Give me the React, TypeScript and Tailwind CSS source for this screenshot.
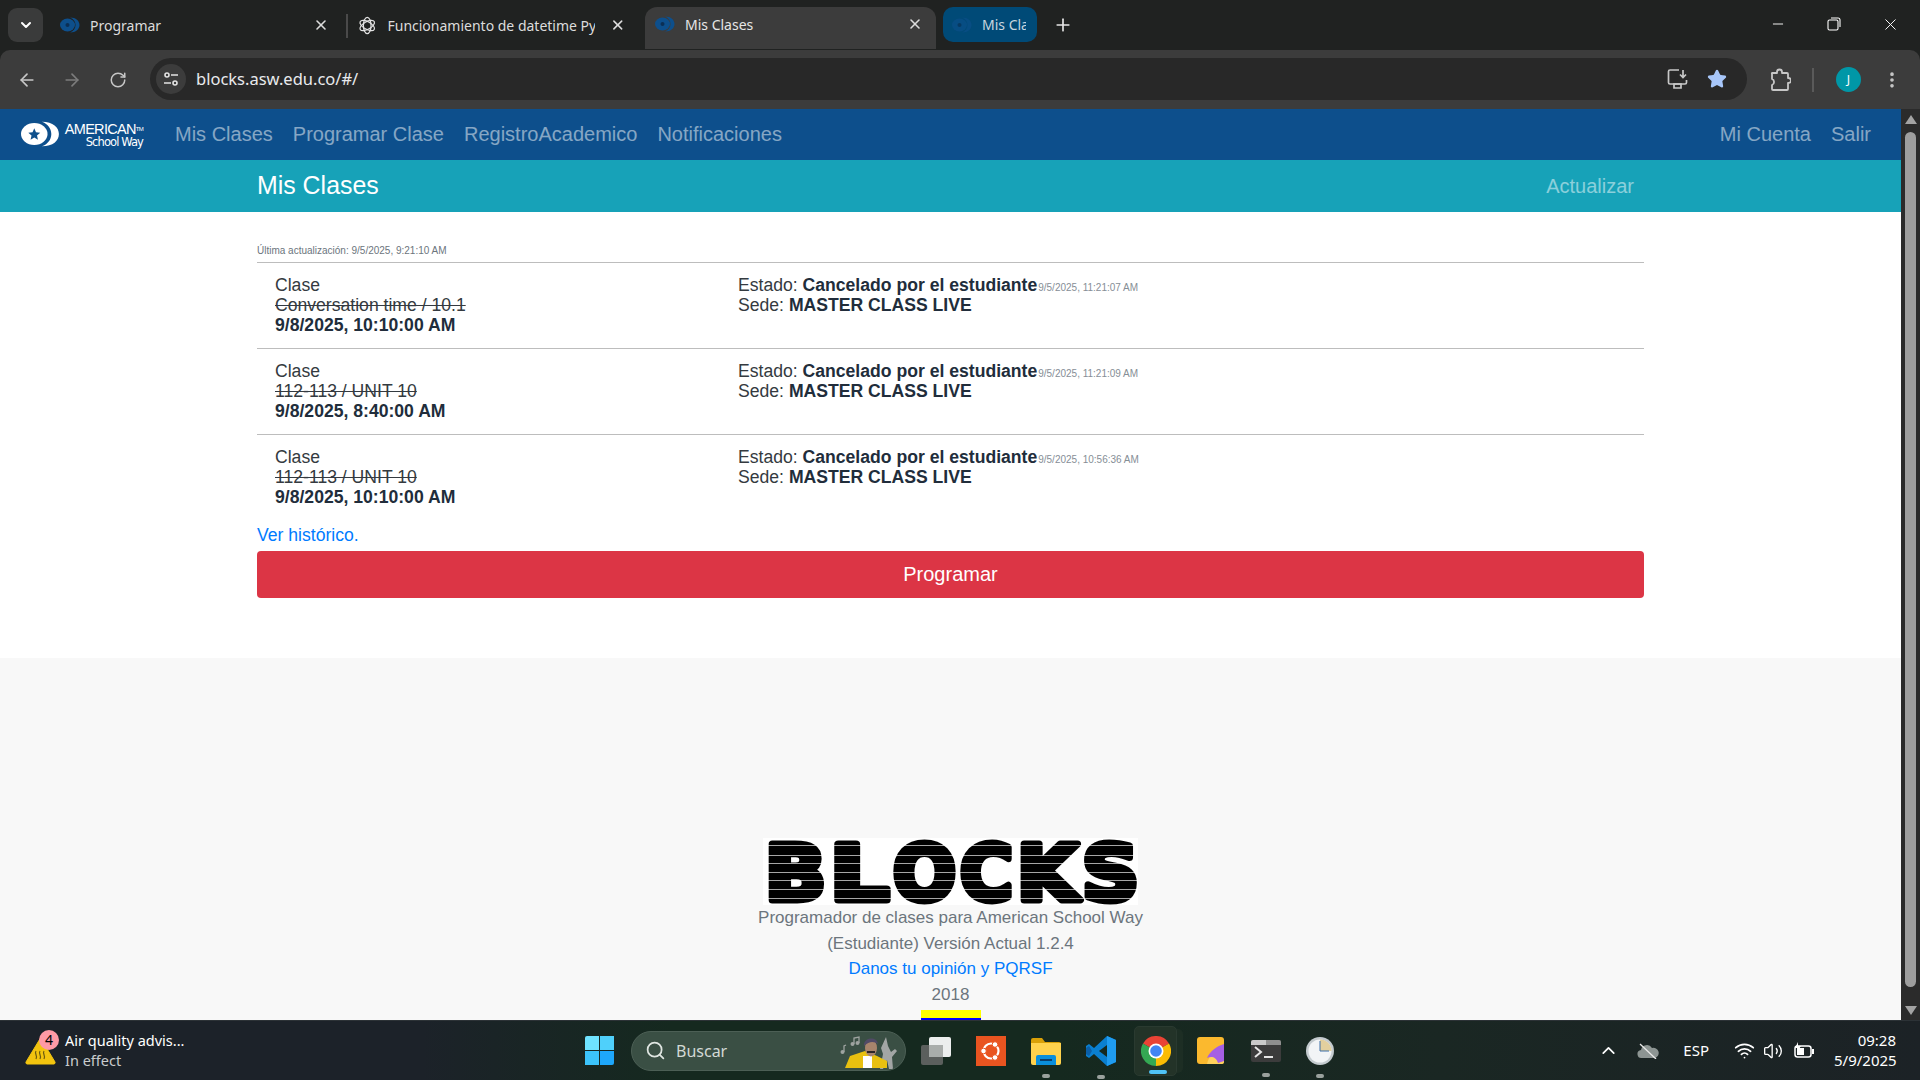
import { ArrowLeft, ArrowRight, RotateCw, X, Plus, ChevronDown, Minus, EllipsisVertical, Star, Search, ChevronUp, Wifi, Volume2 } from 'lucide-react';

const classes = [
  { name: 'Conversation time / 10.1', date: '9/8/2025, 10:10:00 AM', cancelled: '9/5/2025, 11:21:07 AM' },
  { name: '112-113 / UNIT 10', date: '9/8/2025, 8:40:00 AM', cancelled: '9/5/2025, 11:21:09 AM' },
  { name: '112-113 / UNIT 10', date: '9/8/2025, 10:10:00 AM', cancelled: '9/5/2025, 10:56:36 AM' },
];

function AswIcon({ dim = false }: { dim?: boolean }) {
  return (
    <svg width="20" height="16" viewBox="0 0 40 32" className={dim ? 'opacity-60' : ''}>
      <path d="M20 1c12 0 19 7 19 15s-7 15-19 15c7-3 11-8 11-15S27 4 20 1z" fill="#0d4f8c" />
      <ellipse cx="15" cy="16" rx="15" ry="13" fill="#0d4f8c" />
      <circle cx="15" cy="16" r="4" fill="#0b2f55" />
    </svg>
  );
}

function BlocksLogo() {
  const letters: [string, number, number][] = [
    ['B', 4, 55], ['L', 69, 53], ['O', 132, 57], ['C', 199, 47], ['K', 256, 55], ['S', 321, 51],
  ];
  return (
    <svg width="375" height="67" viewBox="0 0 375 67" className="bg-white">
      {letters.map(([l, x, w]) => (
        <text key={l} x={x - 2} y="61.5" textLength={w + 6} lengthAdjust="spacingAndGlyphs" fontFamily="'DejaVu Sans', sans-serif" fontWeight="700" fontSize="76" stroke="#000" strokeWidth="7" strokeLinejoin="round">
          {l}
        </text>
      ))}
      {[7, 17, 25, 34, 42, 51, 60].map((y) => (
        <rect key={y} x="0" y={y} width="375" height="1" fill="#fff" opacity="0.65" />
      ))}
    </svg>
  );
}

function Taskbar() {
  return (
    <div className="h-[60px] shrink-0 flex items-center border-t border-[#2c3236] bg-[linear-gradient(90deg,#1c2229_0%,#1c2229_22%,#15291f_35%,#15291f_55%,#1a2723_75%,#1c2226_100%)] text-white font-['Noto_Sans',sans-serif]">
      {/* weather */}
      <div className="w-[585px] pl-[25px] flex items-center shrink-0">
        <div className="relative w-[31px] h-[29px]">
          <svg width="31" height="29" viewBox="0 0 31 29">
            <path d="M15.5 2 30 26a1.5 1.5 0 0 1-1 2H2a1.5 1.5 0 0 1-1-2z" fill="#f2c40f" stroke="#f2c40f" strokeLinejoin="round" />
            <path d="M11 15c-2 3 2 4 0 8M15 15c-2 3 2 4 0 8M19 15c-2 3 2 4 0 8" fill="none" stroke="#6b5a10" strokeWidth="1.2" />
          </svg>
          <span className="absolute -top-[6px] left-[14px] w-5 h-5 rounded-full bg-[#ff9aa6] text-black text-[14px] leading-5 text-center">4</span>
        </div>
        <div className="ml-[9px] -mt-[2px] text-[14.5px] leading-5">
          <div>Air quality advis...</div>
          <div className="text-[#c9ccce]">In effect</div>
        </div>
      </div>

      {/* windows logo */}
      <div className="w-[29px] h-[29px] grid grid-cols-2 gap-[1px] shrink-0">
        <div className="bg-[#6fe3ff] rounded-tl-[2px]" />
        <div className="bg-[#4fd0fb]" />
        <div className="bg-[#3cc4fb]" />
        <div className="bg-[#1ea7fb] rounded-br-[2px]" />
      </div>

      {/* search */}
      <div className="ml-[17px] w-[275px] h-10 rounded-full bg-[#3a4f44] border border-[#4c5f55] flex items-center pl-[13px] shrink-0 relative overflow-hidden">
        <Search size={21} strokeWidth={2} className="text-[#dfe5e1]" />
        <span className="ml-[10px] text-[16px] text-[#d3d9d5]">Buscar</span>
        <svg width="66" height="38" viewBox="0 0 66 38" className="absolute right-[3px] top-0">
          <path d="M50 5l2 9 3 6 4-3 2 2-5 6 1 12h-4l-2-9-4 9h-3l3-15-2-6z" fill="#a3a6a5" />
          <path d="M9 36l5-12 15-5 12 5 10 5v7z" fill="#e8c010" />
          <path d="M27 24h9v12h-9z" fill="#fff" />
          <ellipse cx="35" cy="16" rx="6" ry="8.500" fill="#a8846c" />
          <path d="M28 14c-1-9 13-10 14-2-4-3-9-3-14 2z" fill="#514a66" />
          <rect x="31" y="19" width="8" height="2" fill="#2c2528" />
          <path d="M18 12V6l5-1v6" fill="none" stroke="#9ea3a0" strokeWidth="1.300" />
          <circle cx="16.500" cy="12" r="2" fill="#9ea3a0" />
          <circle cx="21.500" cy="11" r="2" fill="#9ea3a0" />
          <path d="M8 20v-6l2-1" fill="none" stroke="#9ea3a0" strokeWidth="1.300" />
          <circle cx="6.500" cy="20" r="2" fill="#9ea3a0" />
        </svg>
      </div>

      {/* pinned apps */}
      <div className="ml-[15px] flex items-center relative">
        {/* task view */}
        <div className="w-[30px] h-[28px] relative">
          <div className="absolute left-0 bottom-0 w-[22px] h-[20px] rounded-[2px] bg-[#5b5f5d]" />
          <div className="absolute right-0 top-0 w-[22px] h-[20px] rounded-[2px] bg-[#eceeee]" />
          <div className="absolute left-[8px] top-[8px] w-[14px] h-[12px] bg-[#a9adab]" />
        </div>
        {/* ubuntu */}
        <div className="ml-[25px] w-[30px] h-[30px] bg-[#e95420] flex items-center justify-center">
          <svg width="24" height="24" viewBox="0 0 24 24">
            <circle cx="12" cy="12" r="7.500" fill="none" stroke="#fff" strokeWidth="2.200" />
            <circle cx="4.500" cy="12" r="2.800" fill="#fff" stroke="#e95420" />
            <circle cx="16" cy="5.500" r="2.800" fill="#fff" stroke="#e95420" />
            <circle cx="16" cy="18.500" r="2.800" fill="#fff" stroke="#e95420" />
          </svg>
        </div>
        {/* files */}
        <div className="ml-[25px] relative">
          <svg width="30" height="28" viewBox="0 0 30 28">
            <path d="M0 3a2 2 0 0 1 2-2h9l3 4h14a2 2 0 0 1 2 2v4H0z" fill="#d9a008" />
            <path d="M0 6h30v20a2 2 0 0 1-2 2H2a2 2 0 0 1-2-2z" fill="#ffd24d" />
            <path d="M5 20a2 2 0 0 1 2-2h16a2 2 0 0 1 2 2v8H5z" fill="#0a8fdc" />
            <rect x="9" y="22" width="12" height="2" fill="#0a3f6e" />
          </svg>
          <span className="absolute -bottom-[13px] left-[11px] w-[8px] h-[4px] rounded-full bg-[#9aa19d]" />
        </div>
        {/* vscode */}
        <div className="ml-[25px] relative">
          <svg width="30" height="30" viewBox="0 0 30 30">
            <path d="M21 0l9 4v22l-9 4-13-12-5 4-3-2v-10l3-2 5 4z" fill="#0a7fd0" />
            <path d="M21 0l9 4v22l-9 4z" fill="#1f9cf0" />
            <path d="M21 9l-8 6 8 6z" fill="#15281f" />
            <path d="M3 10l-3 2v6l3 2 3-5z" fill="#0a5fa8" />
          </svg>
          <span className="absolute -bottom-[13px] left-[11px] w-[8px] h-[4px] rounded-full bg-[#9aa19d]" />
        </div>
        {/* chrome */}
        <div className="ml-[18px] w-[43px] h-[50px] rounded-[5px] bg-[#233328] border border-[#2a3a30] flex items-center justify-center relative">
          <span className="absolute -right-[7px] top-[2px] bottom-[2px] w-[6px] rounded-r-[5px] bg-[#1d2e24]" />
          <svg width="30" height="30" viewBox="0 0 30 30">
            <path d="M15 15 2 7.500A15 15 0 0 1 28 7.500z" fill="#ea4335" />
            <path d="M15 15 28 7.500A15 15 0 0 1 15 30z" fill="#fbbc04" />
            <path d="M15 15 15 30A15 15 0 0 1 2 7.500z" fill="#34a853" />
            <circle cx="15" cy="15" r="7.500" fill="#fff" />
            <circle cx="15" cy="15" r="5.800" fill="#4285f4" />
          </svg>
          <span className="absolute bottom-[1px] left-[14px] w-[18px] h-[4px] rounded-full bg-[#4fc3f7]" />
        </div>
        {/* sticky notes */}
        <div className="ml-[20px]">
          <svg width="27" height="27" viewBox="0 0 27 27">
            <rect width="27" height="27" rx="3" fill="#fbb92e" />
            <path d="M27 8c-5 2-10 6-13 10-2 3-3 5-4 9h15a2 2 0 0 0 2-2z" fill="#ffd15c" />
            <path d="M27 7C20 9 13 14 10 21c5-2 9-1 11 5l6-2z" fill="#a65fe3" />
          </svg>
        </div>
        {/* terminal */}
        <div className="ml-[27px] w-[30px] h-[22px] rounded-[2px] bg-[#3c3c3c] relative">
          <div className="h-[5px] rounded-t-[2px] bg-[linear-gradient(90deg,#c9c9c9_0%,#c9c9c9_50%,#8f8f8f_50%,#8f8f8f_100%)]" />
          <svg width="30" height="17" viewBox="0 0 30 17" className="absolute left-0 top-[5px]">
            <path d="M4 2l6 5-6 5" fill="none" stroke="#e6e6e6" strokeWidth="2" />
            <rect x="13" y="11" width="9" height="2" fill="#e6e6e6" />
          </svg>
          <span className="absolute -bottom-[15px] left-[11px] w-[8px] h-[4px] rounded-full bg-[#9aa19d]" />
        </div>
        {/* clock */}
        <div className="ml-[25px] relative">
          <svg width="28" height="28" viewBox="0 0 28 28">
            <circle cx="14" cy="14" r="14" fill="#c4cbcf" />
            <circle cx="14" cy="14" r="11.500" fill="#f2f4f6" />
            <path d="M14 2.500A11.500 11.500 0 0 1 25.500 14H14z" fill="#e2cf9e" />
            <path d="M14 4v10h9" fill="none" stroke="#3c6ea8" strokeWidth="1" />
          </svg>
          <span className="absolute -bottom-[13px] left-[10px] w-[8px] h-[4px] rounded-full bg-[#9aa19d]" />
        </div>
      </div>

      {/* tray */}
      <div className="ml-auto flex items-center pr-[24px]">
        <ChevronUp size={21} strokeWidth={2} className="text-white" />
        <svg width="22" height="16" viewBox="0 0 22 16" className="ml-[18px]">
          <path d="M5 15a4 4 0 0 1-1-8 6 6 0 0 1 11-2 5 5 0 0 1 3 10z" fill="#8d9593" />
          <path d="M3 1l16 15" stroke="#e8e8e8" strokeWidth="1.300" />
        </svg>
        <span className="ml-[24px] text-[15px]">ESP</span>
        <Wifi size={21} strokeWidth={2} className="ml-[25px]" />
        <Volume2 size={20} strokeWidth={1.6} className="ml-[8px]" />
        <svg width="22" height="18" viewBox="0 0 22 18" className="ml-[10px]">
          <rect x="2" y="4" width="16" height="11" rx="2.500" fill="none" stroke="#fff" strokeWidth="1.500" />
          <rect x="4" y="6" width="7" height="7" fill="#fff" />
          <rect x="19" y="7" width="2" height="5" fill="#fff" />
          <path d="M5 0 2 6h3l-1 4 4-6H5z" fill="#fff" />
        </svg>
        <div className="ml-[19px] text-right text-[15px] leading-5 w-[62px] -mt-[1px]">
          <div>09:28</div>
          <div>5/9/2025</div>
        </div>
      </div>
    </div>
  );
}

export default function App() {
  return (
    <div className="h-screen flex flex-col overflow-hidden bg-[#202221] font-['Liberation_Sans',Arial,sans-serif]">
      {/* tab strip */}
      <div className="h-[50px] shrink-0 flex items-start pt-[8px] text-[14px] text-[#dcdcdc] font-['Noto_Sans',sans-serif]">
        <div className="ml-[8px] w-[35px] h-[34px] rounded-[9px] bg-[#3a3b3b] flex items-center justify-center">
          <ChevronDown size={16} strokeWidth={3} className="text-white" />
        </div>
        <div className="w-[270px] ml-[17px] h-[34px] flex items-center shrink-0">
          <AswIcon />
          <span className="ml-[10px] flex-1">Programar</span>
          <X size={16} strokeWidth={2.4} className="mr-[1px]" />
        </div>
        <div className="ml-[16px] w-[2px] h-[24px] mt-[6px] bg-[#4a4a4a]" />
        <div className="w-[268px] ml-[10px] h-[34px] flex items-center shrink-0">
          <svg width="19" height="19" viewBox="0 0 24 24" fill="none" stroke="#e3e3e3" strokeWidth="1.6">
            <ellipse cx="12" cy="12" rx="10.500" ry="5" transform="rotate(30 12 12)" />
            <ellipse cx="12" cy="12" rx="10.500" ry="5" transform="rotate(90 12 12)" />
            <ellipse cx="12" cy="12" rx="10.500" ry="5" transform="rotate(150 12 12)" />
          </svg>
          <span className="ml-[11px] w-[214px] whitespace-nowrap overflow-hidden">Funcionamiento de datetime Py</span>
          <X size={16} strokeWidth={2.4} className="ml-[15px]" />
        </div>
        <div className="ml-[19px] w-[291px] h-[42px] -mt-[1px] rounded-t-[12px] bg-[#3c3c3c] flex items-center pl-[10px] pb-[8px] shrink-0">
          <AswIcon />
          <span className="ml-[10px] flex-1 text-[#e6e6e6]">Mis Clases</span>
          <X size={16} strokeWidth={2.4} className="mr-[13px]" />
        </div>
        <div className="ml-[7px] w-[94px] h-[35px] -mt-[1px] rounded-[10px] bg-[#004a77] flex items-center pl-[9px] shrink-0">
          <AswIcon dim />
          <span className="ml-[10px] w-[44px] overflow-hidden whitespace-nowrap text-[#c8d6df]">Mis Clases</span>
        </div>
        <Plus size={20} strokeWidth={2} className="ml-[16px] mt-[7px] text-[#e6e6e6]" />
        <div className="ml-auto flex items-center h-[32px] pr-[20px] text-white">
          <Minus size={16} strokeWidth={1.4} />
          <svg width="14" height="14" viewBox="0 0 14 14" fill="none" stroke="currentColor" strokeWidth="1.1" className="ml-[41px]">
            <rect x="1" y="3" width="10" height="10" rx="1.5" />
            <path d="M4 1h7a2 2 0 0 1 2 2v7" />
          </svg>
          <X size={19} strokeWidth={1.2} className="ml-[40px]" />
        </div>
      </div>

      {/* toolbar */}
      <div className="h-[59px] shrink-0 rounded-t-[10px] bg-[#3c3c3c] flex items-center text-[#c7c7c7]">
        <ArrowLeft size={20} strokeWidth={2} className="ml-[17px]" />
        <ArrowRight size={20} strokeWidth={2} className="ml-[25px] text-[#7c7c7c]" />
        <RotateCw size={18} strokeWidth={2} className="ml-[27px]" />
        <div className="ml-[23px] w-[1597px] h-[42px] rounded-full bg-[#282828] flex items-center pl-[6px] mb-[1px]">
          <div className="w-[30px] h-[30px] rounded-full bg-[#3c3c3c] flex items-center justify-center">
            <svg width="18" height="18" viewBox="0 0 18 18" fill="none" stroke="#e3e3e3" strokeWidth="1.6">
              <circle cx="5" cy="5" r="2" />
              <path d="M9 5h7M2 13h7" />
              <circle cx="13" cy="13" r="2" />
            </svg>
          </div>
          <span className="ml-[10px] text-[16.5px] text-[#e8eaed] font-['Noto_Sans',sans-serif]">blocks.asw.edu.co/#/</span>
          <svg width="22" height="22" viewBox="0 0 22 22" fill="none" stroke="#c7c7c7" strokeWidth="1.7" className="ml-auto">
            <path d="M12 2H3a1.500 1.500 0 0 0-1.500 1.500v11A1.500 1.500 0 0 0 3 16h15a1.500 1.500 0 0 0 1.500-1.500V12" />
            <path d="M7 20h7v-4H7zM16 2v7M13 6.500l3 3 3-3" />
          </svg>
          <Star size={20} className="ml-[18px] mr-[20px] text-[#a8c7fa] fill-[#a8c7fa]" />
        </div>
        {/* extensions */}
        <svg width="21" height="24" viewBox="0 0 21 24" fill="none" stroke="#c7c7c7" strokeWidth="1.800" strokeLinejoin="round" className="ml-[23px]">
          <path d="M2 5h5V4a2.500 2.500 0 0 1 5 0v1h5a1 1 0 0 1 1 1v4h0.500a2.500 2.500 0 0 1 0 5H18v6a1 1 0 0 1-1 1H3a1 1 0 0 1-1-1v-4a3 3 0 0 0 2-3 3 3 0 0 0-2-3V6a1 1 0 0 1 0-1z" />
        </svg>
        <div className="ml-[21px] w-[2px] h-[24px] bg-[#5a5a5a]" />
        <div className="ml-[22px] w-[25px] h-[25px] rounded-full bg-[#0097a7] text-white text-[12px] flex items-center justify-center font-['Noto_Sans',sans-serif]">J</div>
        <EllipsisVertical size={20} strokeWidth={2.4} className="ml-[21px]" />
      </div>

      {/* page + scrollbar */}
      <div className="flex-1 min-h-0 flex">
        <div className="flex-1 min-w-0 flex flex-col bg-white">
          {/* navbar */}
          <nav className="h-[51px] shrink-0 pb-[2px] bg-[#0d4f8c] flex items-center text-[20px] text-white/50">
            <div className="ml-[21px] w-[122px] h-[34px] flex items-center">
              <svg width="42" height="26" viewBox="0 0 42 26">
                <path d="M22 0c12 0 18 6 18 13s-6 13-18 13c6-2 10-7 10-13S28 2 22 0z" fill="#fff" />
                <ellipse cx="14" cy="13" rx="14" ry="11.500" fill="#fff" />
                <path d="m14 7 1.800 4.200 4.500.4-3.400 3 1 4.400-3.900-2.300-3.900 2.300 1-4.400-3.400-3 4.500-.4z" fill="#0d4f8c" />
              </svg>
              <div className="ml-[4px] mt-[3px] flex-1 text-white leading-none">
                <div className="text-[14.5px] tracking-[-0.7px] whitespace-nowrap">AMERICAN<sup className="text-[6px]">TM</sup></div>
                <div className="text-[11.5px] text-right font-['DejaVu_Sans',sans-serif] tracking-[-0.9px]">School Way</div>
              </div>
            </div>
            <span className="ml-[32px]">Mis Clases</span>
            <span className="ml-[20px]">Programar Clase</span>
            <span className="ml-[20px]">RegistroAcademico</span>
            <span className="ml-[20px]">Notificaciones</span>
            <span className="ml-auto">Mi Cuenta</span>
            <span className="ml-[20px] mr-[30px]">Salir</span>
          </nav>

          {/* sub header */}
          <div className="h-[52px] shrink-0 bg-[#17a2b8] flex items-center pl-[257px]">
            <h1 className="text-[24.9px] text-white">Mis Clases</h1>
            <span className="ml-auto mr-[267px] text-[20px] text-white/50">Actualizar</span>
          </div>

          {/* content */}
          <main className="h-[446px] shrink-0 pl-[257px] pr-[257px] pt-[33px] text-[17.6px] leading-[20px] text-[#343a40]">
            <div className="text-[10px] leading-[12px] text-[#6c757d] pb-[5px] border-b border-[#bdbdbd]">Última actualización: 9/5/2025, 9:21:10 AM</div>
            {classes.map((c, i) => (
              <div key={i} className={`flex h-[86px] pl-[18px] pt-[12px] ${i < 2 ? 'border-b border-[#bdbdbd]' : ''}`}>
                <div className="w-[463px] shrink-0">
                  <div>Clase</div>
                  <div className="line-through">{c.name}</div>
                  <div className="font-bold text-[#212d3b]">{c.date}</div>
                </div>
                <div>
                  <div className="h-[20px] flex items-baseline">
                    <span className="whitespace-pre">Estado: </span>
                    <b className="text-[#212d3b]">Cancelado por el estudiante</b>
                    <span className="ml-[1px] text-[10px] text-[#868e96]">{c.cancelled}</span>
                  </div>
                  <div>
                    Sede: <b className="text-[#212d3b]">MASTER CLASS LIVE</b>
                  </div>
                </div>
              </div>
            ))}
            <div className="text-[#007bff] mt-[5px] h-[18px] leading-[18px]">Ver histórico.</div>
            <button className="mt-[7px] w-full h-[47px] pb-[2px] rounded-[4px] bg-[#dc3545] text-white text-[20px]">Programar</button>
          </main>

          {/* footer */}
          <footer className="flex-1 min-h-0 bg-[#f8f8f8] flex flex-col items-center pt-[180px] text-[17px] leading-[25.5px] text-[#6c757d]">
            <BlocksLogo />
            <div>Programador de clases para American School Way</div>
            <div>(Estudiante) Versión Actual 1.2.4</div>
            <div className="text-[#007bff]">Danos tu opinión y PQRSF</div>
            <div>2018</div>
            <div className="mt-[3px] w-[60px]">
              <div className="h-[8px] bg-[#ffff00]" />
              <div className="h-[2px] bg-[#0000ff]" />
            </div>
          </footer>
        </div>

        {/* scrollbar */}
        <div className="w-[19px] shrink-0 bg-[#2b2b2b] flex flex-col items-center">
          <div className="mt-[6px] w-0 h-0 border-x-[6px] border-x-transparent border-b-[9px] border-b-[#a3a3a3]" />
          <div className="mt-[8px] w-[11px] h-[855px] rounded-full bg-[#9e9e9e]" />
          <div className="mt-auto mb-[5px] w-0 h-0 border-x-[6px] border-x-transparent border-t-[9px] border-t-[#a3a3a3]" />
        </div>
      </div>

      <Taskbar />
    </div>
  );
}
